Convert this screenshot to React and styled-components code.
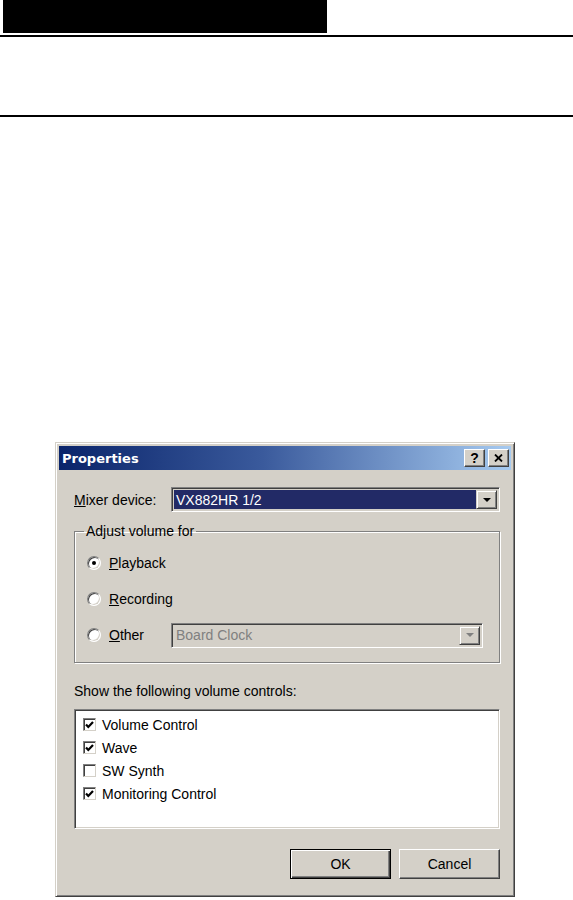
import React from "react";
import styled, { createGlobalStyle, css } from "styled-components";

const face = "#d4d0c8";
const shadow = "#808080";
const dark = "#404040";

const GlobalStyle = createGlobalStyle`
  html, body {
    margin: 0;
    padding: 0;
    background: #fff;
  }
  body {
    width: 573px;
    height: 900px;
    overflow: hidden;
    font-family: "Liberation Sans", Arial, sans-serif;
  }
`;

const Page = styled.div`
  display: flex;
  flex-direction: column;
`;

const HeaderBar = styled.div`
  margin-left: 3px;
  width: 324px;
  height: 33px;
  background: #000;
`;

const Rule = styled.div`
  height: 2px;
  background: #000;
  margin-top: ${p => p.$gap}px;
`;

const raised = css`
  border: 1px solid;
  border-color: #fff ${dark} ${dark} #fff;
  box-shadow: inset -1px -1px 0 ${shadow};
`;

const sunken = css`
  border: 1px solid;
  border-color: ${shadow} #fff #fff ${shadow};
  box-shadow: inset 1px 1px 0 ${dark}, inset -1px -1px 0 ${face};
`;

const Dialog = styled.div`
  margin: 325px 0 0 55px;
  width: 460px;
  height: 455px;
  box-sizing: border-box;
  background: ${face};
  border: 1px solid;
  border-color: ${face} ${dark} ${dark} ${face};
  box-shadow: inset 1px 1px 0 #fff, inset -1px -1px 0 ${shadow};
  padding: 3px;
  display: flex;
  flex-direction: column;
`;

const TitleBar = styled.div`
  height: 24px;
  display: flex;
  align-items: center;
  padding: 0 2px 0 3px;
  background: linear-gradient(to right, #0a246a 0%, #3a5a9c 45%, #a6caf0 100%);
`;

const Title = styled.div`
  flex: 1;
  color: #fff;
  font-family: "DejaVu Sans", Verdana, sans-serif;
  font-weight: bold;
  font-size: 13px;
`;

const CapButton = styled.div`
  width: 21px;
  height: 18px;
  box-sizing: border-box;
  margin-left: ${p => p.$gap || 0}px;
  background: ${face};
  ${raised};
  display: flex;
  align-items: center;
  justify-content: center;
  font-family: "Liberation Sans", Arial, sans-serif;
  font-weight: bold;
  font-size: 14px;
  color: #000;
`;

const Body = styled.div`
  flex: 1;
  display: flex;
  flex-direction: column;
  padding: 17px 11px 0 15px;
  font-size: 14px;
  color: #000;
`;

const Row = styled.div`
  display: flex;
  align-items: center;
`;

const Label = styled.span`
  width: ${p => p.$w}px;
  flex: none;
  u { text-decoration: underline; }
`;

const Combo = styled.div`
  flex: ${p => (p.$w ? "none" : 1)};
  width: ${p => (p.$w ? `${p.$w}px` : "auto")};
  height: 25px;
  box-sizing: border-box;
  ${sunken};
  padding: 2px;
  display: flex;
  background: ${face};
`;

const ComboText = styled.div`
  flex: 1;
  display: flex;
  align-items: center;
  padding-left: 2px;
  background: ${p => (p.$selected ? "#222a66" : face)};
  color: ${p => (p.$selected ? "#fff" : shadow)};
`;

const DropButton = styled.div`
  width: 21px;
  box-sizing: border-box;
  background: ${face};
  border: 1px solid;
  border-color: ${face} ${dark} ${dark} ${face};
  box-shadow: inset 1px 1px 0 #fff, inset -1px -1px 0 ${shadow};
  display: flex;
  align-items: center;
  justify-content: center;
`;

const Arrow = styled.div`
  width: 0;
  height: 0;
  border-left: 4px solid transparent;
  border-right: 4px solid transparent;
  border-top: 4px solid ${p => (p.$disabled ? shadow : "#000")};
`;

const Group = styled.fieldset`
  margin: 11px 0 0 0;
  padding: 0 15px 14px 12px;
  height: 140px;
  box-sizing: border-box;
  border: 1px solid ${shadow};
  box-shadow: 1px 1px 0 #fff, inset 1px 1px 0 #fff;
  display: flex;
  flex-direction: column;
`;

const Legend = styled.legend`
  margin-left: -3px;
  padding: 0 2px;
`;

const RadioRow = styled.div`
  display: flex;
  align-items: center;
  height: 36px;
  margin-top: ${p => (p.$first ? 6 : 0)}px;
`;

const RadioCircle = styled.span`
  width: 14px;
  height: 14px;
  box-sizing: border-box;
  border-radius: 50%;
  border: 1px solid;
  border-color: ${shadow} #fff #fff ${shadow};
  box-shadow: inset 1px 1px 0 ${dark}, inset -1px -1px 0 ${face};
  background: #fff;
  display: flex;
  align-items: center;
  justify-content: center;
  margin-right: 8px;
  flex: none;
  &::after {
    content: "";
    width: 4px;
    height: 4px;
    border-radius: 50%;
    background: #000;
    display: ${p => (p.$checked ? "block" : "none")};
  }
`;

const Caption = styled.div`
  margin-top: 20px;
`;

const ListBox = styled.div`
  margin-top: 10px;
  height: 120px;
  box-sizing: border-box;
  ${sunken};
  background: #fff;
  padding: 3px 8px;
  display: flex;
  flex-direction: column;
`;

const CheckRow = styled.div`
  display: flex;
  align-items: center;
  height: 23px;
`;

const CheckBox = styled.span`
  width: 13px;
  height: 13px;
  box-sizing: border-box;
  border: 1px solid;
  border-color: ${shadow} #d4d0c8 #d4d0c8 ${shadow};
  box-shadow: inset 1px 1px 0 ${dark};
  background: #fff;
  margin-right: 6px;
  display: flex;
  align-items: center;
  justify-content: center;
  flex: none;
`;

const Buttons = styled.div`
  margin-top: 20px;
  display: flex;
  justify-content: flex-end;
  gap: 8px;
`;

const Button = styled.div`
  width: 101px;
  height: 30px;
  box-sizing: border-box;
  background: ${face};
  display: flex;
  align-items: center;
  justify-content: center;
  ${p =>
    p.$default
      ? css`
          border: 1px solid #000;
          box-shadow: inset 1px 1px 0 #fff, inset -1px -1px 0 ${dark}, inset -2px -2px 0 ${shadow};
        `
      : raised}
`;

const Check = () => (
  <svg width="9" height="8" viewBox="0 0 9 8">
    <path d="M1 3.5 L3.3 6 L8 1" stroke="#000" strokeWidth="2.2" fill="none" />
  </svg>
);

const items = [
  { name: "Volume Control", on: true },
  { name: "Wave", on: true },
  { name: "SW Synth", on: false },
  { name: "Monitoring Control", on: true },
];

export default function App() {
  return (
    <Page>
      <GlobalStyle />
      <HeaderBar />
      <Rule $gap={2} />
      <Rule $gap={78} />
      <Dialog>
        <TitleBar>
          <Title>Properties</Title>
          <CapButton>?</CapButton>
          <CapButton $gap={3}>
            <svg width="9" height="8" viewBox="0 0 9 8">
              <path d="M1 0.5 L8 7.5 M8 0.5 L1 7.5" stroke="#000" strokeWidth="1.8" />
            </svg>
          </CapButton>
        </TitleBar>
        <Body>
          <Row>
            <Label $w={97}>
              <u>M</u>ixer device:
            </Label>
            <Combo>
              <ComboText $selected>VX882HR 1/2</ComboText>
              <DropButton>
                <Arrow />
              </DropButton>
            </Combo>
          </Row>
          <Group>
            <Legend>Adjust volume for</Legend>
            <RadioRow $first>
              <RadioCircle $checked />
              <span>
                <u>P</u>layback
              </span>
            </RadioRow>
            <RadioRow>
              <RadioCircle />
              <span>
                <u>R</u>ecording
              </span>
            </RadioRow>
            <RadioRow>
              <RadioCircle />
              <Label $w={62}>
                <u>O</u>ther
              </Label>
              <Combo $w={312}>
                <ComboText>Board Clock</ComboText>
                <DropButton>
                  <Arrow $disabled />
                </DropButton>
              </Combo>
            </RadioRow>
          </Group>
          <Caption>Show the following volume controls:</Caption>
          <ListBox>
            {items.map(it => (
              <CheckRow key={it.name}>
                <CheckBox>{it.on && <Check />}</CheckBox>
                {it.name}
              </CheckRow>
            ))}
          </ListBox>
          <Buttons>
            <Button $default>OK</Button>
            <Button>Cancel</Button>
          </Buttons>
        </Body>
      </Dialog>
    </Page>
  );
}
